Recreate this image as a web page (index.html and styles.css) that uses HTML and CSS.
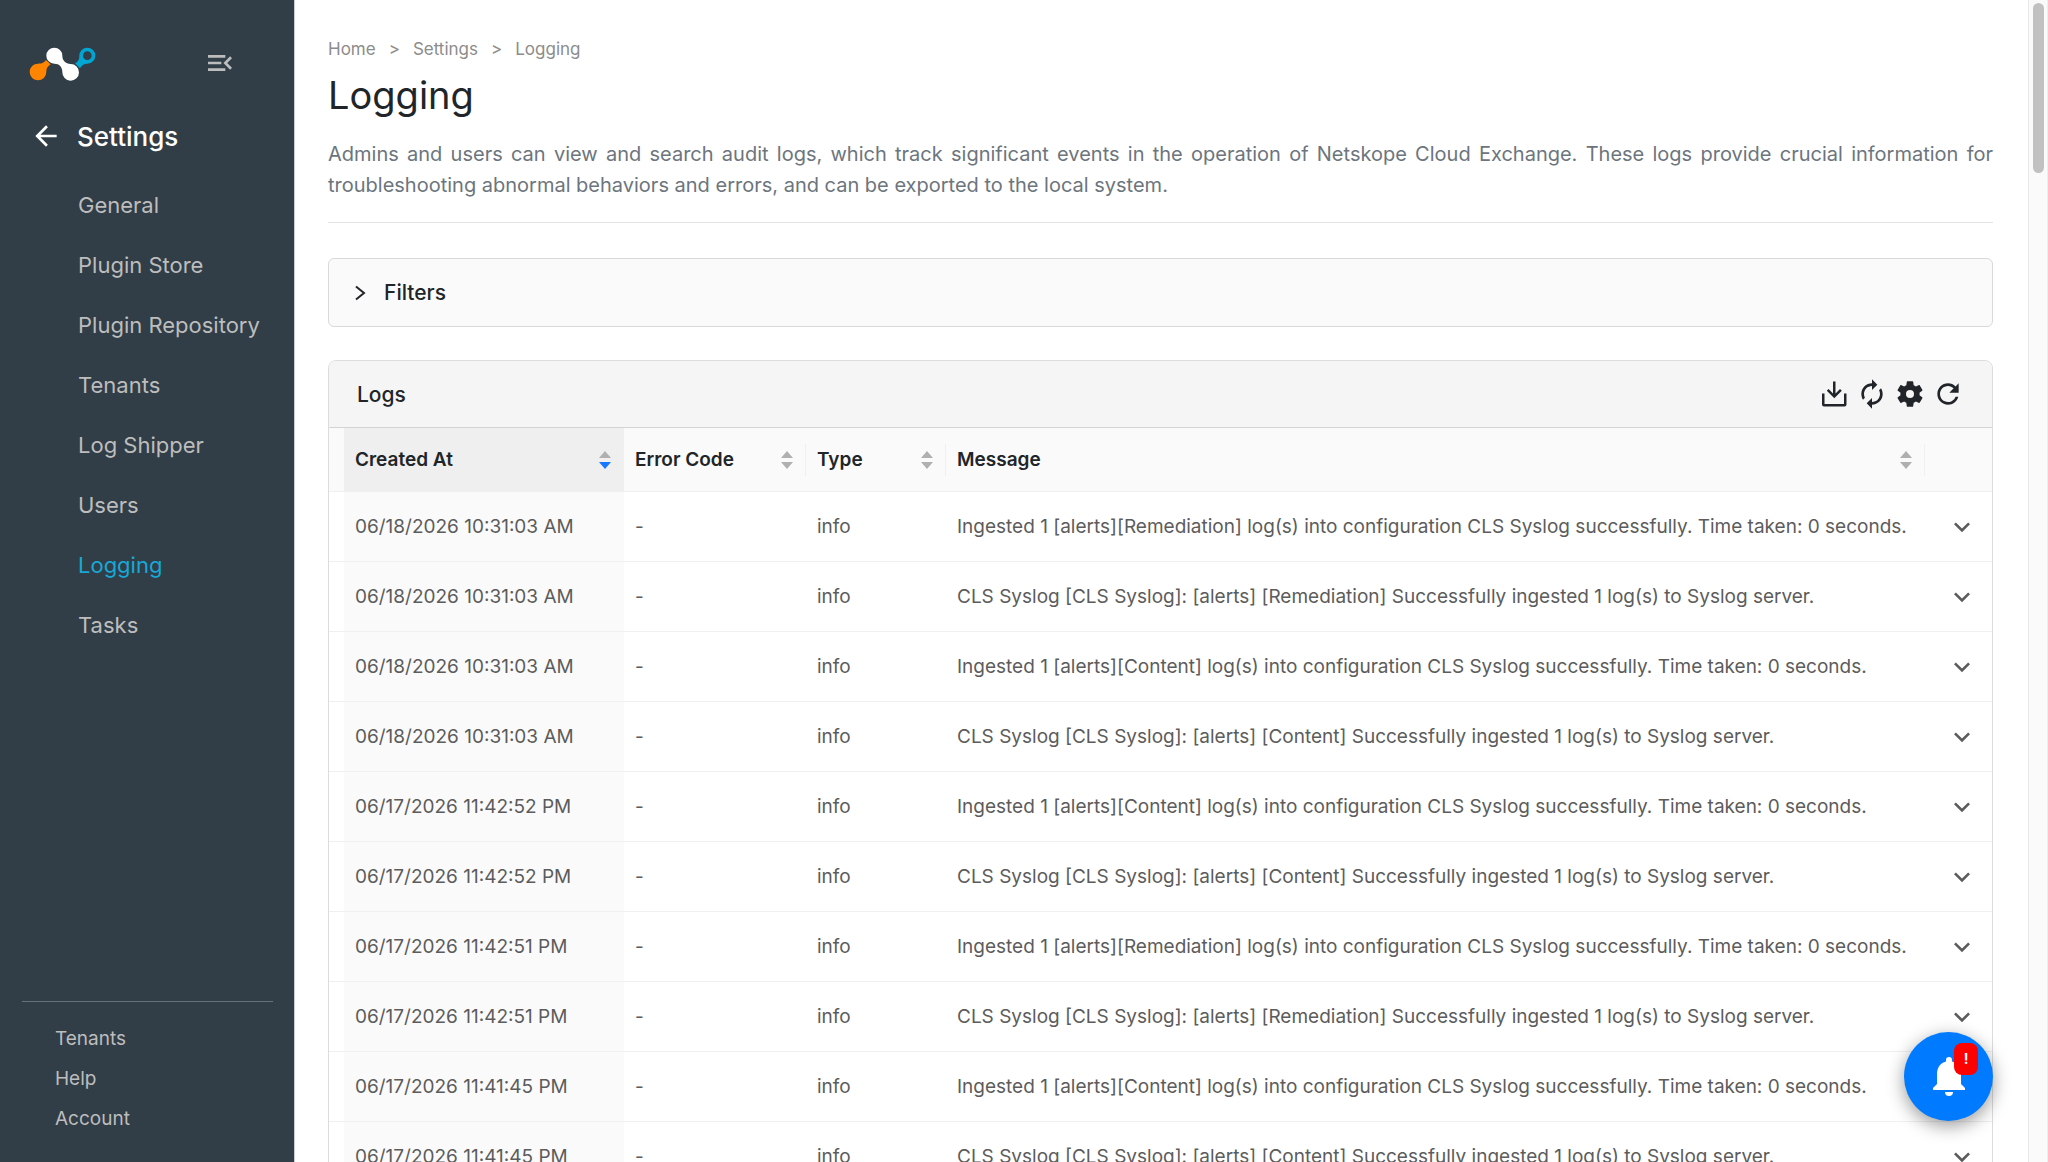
FILE: index.html
```html
<!DOCTYPE html>
<html lang="en">

<head>
  <meta charset="utf-8">
  <title>Logging</title>
  <link rel="stylesheet" href="styles.css">
</head>

<body>
  <svg class="symbols" aria-hidden="true">
    <symbol id="chevron" viewBox="0 0 24 24">
      <path d="M7.41 8.59 12 13.17l4.59-4.58L18 10l-6 6-6-6 1.41-1.41z" />
    </symbol>
    <symbol id="sorter" viewBox="0 0 12 20">
      <path class="up" d="M6 1l6 7H0z" />
      <path class="down" d="M6 19l6-7H0z" />
    </symbol>
  </svg>

  <div class="app">
    <aside class="sidebar">
      <div class="brand">
        <svg class="logo" viewBox="86 142 201 102" aria-label="Netskope">
          <path fill="#ff8400" d="M137 181l14 13c-8 6-13 11-13 23a25 25 0 1 1-25-25c13 0 18-3 24-11z" />
          <path fill="#00a5d2" fill-rule="evenodd" d="M261 144a24 24 0 1 1 0 48c-11 0-17 6-22 14l-15-15c8-5 13-10 13-23a24 24 0 0 1 24-24zm0 11a13 13 0 1 0 0 26 13 13 0 0 0 0-26z" />
          <path fill="#fff" d="M162 144a24 24 0 0 1 24 24c0 14 9 24 25 25a25 25 0 1 1-25 24c0-15-9-25-24-25a24 24 0 0 1 0-48z" />
        </svg>
        <button class="icon-btn collapse" aria-label="Collapse menu">
          <svg viewBox="0 0 24 24"><path d="M3 18h13v-2H3v2zM3 6v2h13V6H3zm0 7h10v-2H3v2zm18 2.59L17.42 12 21 8.41 19.59 7l-5 5 5 5L21 15.59z" /></svg>
        </button>
      </div>

      <a class="section" href="#">
        <svg viewBox="0 0 24 24"><path d="M20 11H7.83l5.59-5.59L12 4l-8 8 8 8 1.41-1.41L7.83 13H20v-2z" /></svg>
        Settings
      </a>

      <nav class="menu">
        <a href="#">General</a>
        <a href="#">Plugin Store</a>
        <a href="#">Plugin Repository</a>
        <a href="#">Tenants</a>
        <a href="#">Log Shipper</a>
        <a href="#">Users</a>
        <a class="active" href="#">Logging</a>
        <a href="#">Tasks</a>
      </nav>

      <nav class="footer-menu">
        <a href="#">Tenants</a>
        <a href="#">Help</a>
        <a href="#">Account</a>
      </nav>
    </aside>

    <main class="content">
      <div class="breadcrumb">
        <a href="#">Home</a><span>&gt;</span><a href="#">Settings</a><span>&gt;</span><a href="#">Logging</a>
      </div>
      <h1>Logging</h1>
      <p class="description">Admins and users can view and search audit logs, which track significant events in the operation of Netskope Cloud Exchange. These logs provide crucial information for troubleshooting abnormal behaviors and errors, and can be exported to the local system.</p>

      <button class="filters" aria-expanded="false">
        <svg viewBox="0 0 12 16"><path d="M2 1.500l8 6.500-8 6.500" /></svg>
        Filters
      </button>

      <section class="card">
        <header class="card-header">
          <h2>Logs</h2>
          <div class="actions">
            <button class="icon-btn" aria-label="Export">
              <svg viewBox="0 0 32 32"><path d="M15 3.500h2.500v12l4.500-4.500 1.800 1.800-7.500 7.500-7.500-7.500 1.800-1.800 4.400 4.500zM4 15.500h2.500v10.500h19.500V15.500h2.500v11a2 2 0 0 1-2 2H6a2 2 0 0 1-2-2z" /></svg>
            </button>
            <button class="icon-btn" aria-label="Sync">
              <svg viewBox="0 0 24 24"><path d="M12 6v3l4-4-4-4v3c-4.420 0-8 3.580-8 8 0 1.570.46 3.030 1.240 4.260L6.700 14.800c-.45-.83-.7-1.790-.7-2.800 0-3.310 2.690-6 6-6zm6.760 1.740L17.300 9.200c.44.840.7 1.790.7 2.800 0 3.310-2.690 6-6 6v-3l-4 4 4 4v-3c4.420 0 8-3.580 8-8 0-1.570-.46-3.030-1.240-4.260z" /></svg>
            </button>
            <button class="icon-btn" aria-label="Settings">
              <svg viewBox="0 0 24 24"><path d="M19.140 12.940c.04-.3.06-.61.06-.94 0-.32-.02-.64-.07-.94l2.030-1.580c.18-.14.23-.41.12-.61l-1.920-3.320c-.12-.22-.37-.29-.59-.22l-2.390.96c-.5-.38-1.030-.7-1.620-.94l-.36-2.540c-.04-.24-.24-.41-.48-.41h-3.840c-.24 0-.43.17-.47.41l-.36 2.540c-.59.24-1.130.57-1.620.94l-2.390-.96c-.22-.08-.47 0-.59.22L2.740 8.870c-.12.21-.08.47.12.61l2.030 1.580c-.05.3-.09.63-.09.94s.02.64.07.94l-2.030 1.580c-.18.14-.23.41-.12.61l1.920 3.320c.12.22.37.29.59.22l2.390-.96c.5.38 1.030.7 1.620.94l.36 2.540c.05.24.24.41.48.41h3.840c.24 0 .44-.17.47-.41l.36-2.540c.59-.24 1.130-.56 1.620-.94l2.390.96c.22.08.47 0 .59-.22l1.920-3.320c.12-.22.07-.47-.12-.61l-2.010-1.580zM12 15a3 3 0 1 1 0-6 3 3 0 0 1 0 6z" /></svg>
            </button>
            <button class="icon-btn" aria-label="Refresh">
              <svg viewBox="0 0 24 24"><path d="M17.650 6.350C16.200 4.900 14.210 4 12 4c-4.420 0-7.990 3.580-7.990 8s3.570 8 7.990 8c3.730 0 6.840-2.550 7.730-6h-2.080c-.82 2.330-3.040 4-5.650 4-3.310 0-6-2.690-6-6s2.690-6 6-6c1.660 0 3.140.69 4.220 1.780L13 11h7V4l-2.350 2.350z" /></svg>
            </button>
          </div>
        </header>

        <table class="logs">
          <thead>
            <tr>
              <th class="col-gap"></th>
              <th class="col-date sorted"><div>Created At <svg><use href="#sorter" /></svg></div></th>
              <th class="col-code"><div>Error Code <svg><use href="#sorter" /></svg></div></th>
              <th class="col-type"><div>Type <svg><use href="#sorter" /></svg></div></th>
              <th class="col-message"><div>Message <svg><use href="#sorter" /></svg></div></th>
              <th class="col-expand"></th>
            </tr>
          </thead>
          <tbody>
            <tr>
              <td></td><td class="date">06/18/2026 10:31:03 AM</td><td>-</td><td>info</td>
              <td>Ingested 1 [alerts][Remediation] log(s) into configuration CLS Syslog successfully. Time taken: 0 seconds.</td>
              <td><button class="expand" aria-label="Expand row"><svg><use href="#chevron" /></svg></button></td>
            </tr>
            <tr>
              <td></td><td class="date">06/18/2026 10:31:03 AM</td><td>-</td><td>info</td>
              <td>CLS Syslog [CLS Syslog]: [alerts] [Remediation] Successfully ingested 1 log(s) to Syslog server.</td>
              <td><button class="expand" aria-label="Expand row"><svg><use href="#chevron" /></svg></button></td>
            </tr>
            <tr>
              <td></td><td class="date">06/18/2026 10:31:03 AM</td><td>-</td><td>info</td>
              <td>Ingested 1 [alerts][Content] log(s) into configuration CLS Syslog successfully. Time taken: 0 seconds.</td>
              <td><button class="expand" aria-label="Expand row"><svg><use href="#chevron" /></svg></button></td>
            </tr>
            <tr>
              <td></td><td class="date">06/18/2026 10:31:03 AM</td><td>-</td><td>info</td>
              <td>CLS Syslog [CLS Syslog]: [alerts] [Content] Successfully ingested 1 log(s) to Syslog server.</td>
              <td><button class="expand" aria-label="Expand row"><svg><use href="#chevron" /></svg></button></td>
            </tr>
            <tr>
              <td></td><td class="date">06/17/2026 11:42:52 PM</td><td>-</td><td>info</td>
              <td>Ingested 1 [alerts][Content] log(s) into configuration CLS Syslog successfully. Time taken: 0 seconds.</td>
              <td><button class="expand" aria-label="Expand row"><svg><use href="#chevron" /></svg></button></td>
            </tr>
            <tr>
              <td></td><td class="date">06/17/2026 11:42:52 PM</td><td>-</td><td>info</td>
              <td>CLS Syslog [CLS Syslog]: [alerts] [Content] Successfully ingested 1 log(s) to Syslog server.</td>
              <td><button class="expand" aria-label="Expand row"><svg><use href="#chevron" /></svg></button></td>
            </tr>
            <tr>
              <td></td><td class="date">06/17/2026 11:42:51 PM</td><td>-</td><td>info</td>
              <td>Ingested 1 [alerts][Remediation] log(s) into configuration CLS Syslog successfully. Time taken: 0 seconds.</td>
              <td><button class="expand" aria-label="Expand row"><svg><use href="#chevron" /></svg></button></td>
            </tr>
            <tr>
              <td></td><td class="date">06/17/2026 11:42:51 PM</td><td>-</td><td>info</td>
              <td>CLS Syslog [CLS Syslog]: [alerts] [Remediation] Successfully ingested 1 log(s) to Syslog server.</td>
              <td><button class="expand" aria-label="Expand row"><svg><use href="#chevron" /></svg></button></td>
            </tr>
            <tr>
              <td></td><td class="date">06/17/2026 11:41:45 PM</td><td>-</td><td>info</td>
              <td>Ingested 1 [alerts][Content] log(s) into configuration CLS Syslog successfully. Time taken: 0 seconds.</td>
              <td><button class="expand" aria-label="Expand row"><svg><use href="#chevron" /></svg></button></td>
            </tr>
            <tr>
              <td></td><td class="date">06/17/2026 11:41:45 PM</td><td>-</td><td>info</td>
              <td>CLS Syslog [CLS Syslog]: [alerts] [Content] Successfully ingested 1 log(s) to Syslog server.</td>
              <td><button class="expand" aria-label="Expand row"><svg><use href="#chevron" /></svg></button></td>
            </tr>
          </tbody>
        </table>
      </section>
    </main>

    <div class="scrollbar"><div class="thumb"></div></div>
  </div>

  <button class="notify" aria-label="Notifications">
    <svg viewBox="0 0 32 40"><path d="M16 0a3 3 0 0 1 3 3v1.500C25 6 28 11 28 17v10l4 4v2H0v-2l4-4V17C4 11 7 6 13 4.500V3a3 3 0 0 1 3-3zM12 35h8a4 4 0 0 1-8 0z" /></svg>
    <span class="badge">!</span>
  </button>
</body>

</html>
```

FILE: styles.css
```css
* {
  box-sizing: border-box;
}

body {
  margin: 0;
  font-family: Inter, "Liberation Sans", sans-serif;
  font-size: 18px;
  color: #212529;
  background: #fff;
}

a {
  color: inherit;
  text-decoration: none;
}

button {
  font: inherit;
  color: inherit;
  border: 0;
  background: none;
  padding: 0;
}

svg {
  display: block;
  fill: currentColor;
}

.symbols {
  position: absolute;
  width: 0;
  height: 0;
}

.app {
  display: flex;
  height: 100vh;
  overflow: hidden;
}

/* sidebar */
.sidebar {
  flex: 0 0 295px;
  display: flex;
  flex-direction: column;
  background: #313e48;
  color: #bdbdbd;
  border-right: 1px solid #c9ced4;
}

.brand {
  display: flex;
  align-items: flex-start;
  justify-content: space-between;
  height: 34px;
  margin: 47px 58px 0 29px;
}

.logo {
  width: 67px;
  height: 34px;
}

.icon-btn svg {
  width: 32px;
  height: 32px;
}

.section {
  display: flex;
  align-items: center;
  gap: 15px;
  height: 60px;
  margin-top: 25px;
  padding-left: 30px;
  font-size: 26px;
  font-weight: 500;
  color: #fff;
}

.section svg {
  width: 32px;
  height: 32px;
}

.menu {
  display: flex;
  flex-direction: column;
  margin-top: 9px;
  padding-left: 78px;
  font-size: 22px;
  line-height: 60px;
}

.menu .active {
  color: #17a9d6;
}

.footer-menu {
  display: flex;
  flex-direction: column;
  margin: auto 21px 23px 22px;
  padding: 17px 0 0 33px;
  border-top: 1px solid #67717a;
  font-size: 19px;
  line-height: 40px;
}

/* page */
.content {
  flex: 1;
  padding: 36px 35px 0 33px;
}

.breadcrumb {
  display: flex;
  gap: 13px;
  font-size: 17px;
  line-height: 26px;
  color: #8c8c8c;
}

h1 {
  margin: 9px 0 0;
  font-size: 38px;
  line-height: 48px;
  font-weight: 400;
}

.description {
  margin: 20px 0 35px;
  padding-bottom: 21px;
  border-bottom: 1px solid #e2e3e5;
  font-size: 20px;
  line-height: 31px;
  color: #6c757d;
  text-align: justify;
}

.filters {
  display: flex;
  align-items: center;
  gap: 18px;
  width: 100%;
  height: 69px;
  padding-left: 25px;
  border: 1px solid #d9d9d9;
  border-radius: 6px;
  background: #fafafa;
  font-size: 21px;
  font-weight: 500;
}

.filters svg {
  width: 12px;
  height: 16px;
  fill: none;
  stroke: #212529;
  stroke-width: 2;
}

.card {
  margin-top: 33px;
  border: 1px solid #dcdcdc;
  border-radius: 8px;
  overflow: hidden;
}

.card-header {
  display: flex;
  align-items: center;
  justify-content: space-between;
  height: 67px;
  padding: 0 28px;
  background: #f5f5f5;
  border-bottom: 1px solid #d4d4d4;
}

.card-header h2 {
  margin: 0;
  font-size: 21px;
  font-weight: 500;
}

.actions {
  display: flex;
  gap: 6px;
}

/* log table */
.logs {
  width: 100%;
  table-layout: fixed;
  border-collapse: separate;
  border-spacing: 0;
}

.logs th {
  height: 64px;
  padding: 0;
  background: #fafafa;
  border-bottom: 1px solid #f0f0f0;
  font-size: 19px;
  font-weight: 600;
  text-align: left;
}

.logs th div {
  display: flex;
  align-items: center;
  justify-content: space-between;
  height: 32px;
  padding: 0 12px 0 11px;
  border-right: 1px solid #f0f0f0;
}

.logs th svg {
  width: 12px;
  height: 20px;
  color: #b0b0b0;
}

.logs .sorted {
  background: #efefef;
}

.logs .sorted svg {
  --down: #1677ff;
}

.down {
  fill: var(--down, currentColor);
}

.col-gap {
  width: 15px;
}

.col-date {
  width: 280px;
}

.col-code {
  width: 182px;
}

.col-type {
  width: 140px;
}

.col-expand {
  width: 67px;
}

.logs td {
  height: 70px;
  padding: 0 11px;
  border-bottom: 1px solid #f0f0f0;
  font-size: 19px;
  color: #5c5c5c;
  white-space: nowrap;
}

.logs td:first-child {
  padding: 0;
}

.logs .date {
  background: #fafafa;
}

.expand {
  display: block;
  margin-left: 10px;
}

.expand svg {
  width: 32px;
  height: 32px;
}

.scrollbar {
  flex: 0 0 20px;
  padding: 3px 3px 0 4px;
  background: #fafafa;
  border-left: 1px solid #e8e8e8;
  border-right: 1px solid #ededed;
}

.thumb {
  width: 11px;
  height: 170px;
  border-radius: 6px;
  background: #c1c1c1;
}

/* floating notification button */
.notify {
  position: fixed;
  right: 55px;
  bottom: 41px;
  display: flex;
  align-items: center;
  justify-content: center;
  width: 89px;
  height: 89px;
  border-radius: 50%;
  background: #007bff;
  color: #fff;
  box-shadow: 0 5px 18px rgba(0, 0, 0, 0.4);
}

.notify > svg {
  width: 32px;
  height: 40px;
}

.badge {
  position: absolute;
  top: 11px;
  right: 15px;
  width: 24px;
  border-radius: 8px;
  background: #f00;
  font-size: 14px;
  font-weight: 700;
  line-height: 32px;
}
```
